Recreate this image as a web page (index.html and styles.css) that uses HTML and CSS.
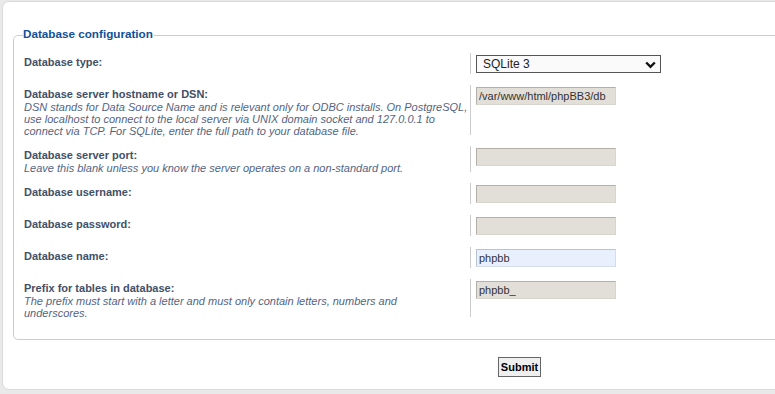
FILE: index.html
```html
<!DOCTYPE html>
<html lang="en">
<head>
<meta charset="utf-8">
<title>Database configuration</title>
<link rel="stylesheet" href="styles.css">
</head>
<body>
<div class="panel">
  <form class="form">
    <fieldset class="config">
      <legend class="legend">Database configuration</legend>

      <div class="row">
        <div class="term"><label class="label" for="dbms">Database type:</label></div>
        <div class="field">
          <div class="select-wrap">
            <select id="dbms" class="select">
              <option>SQLite 3</option>
            </select>
            <svg class="chevron" width="11" height="8" viewBox="0 0 11 8"><path d="M1.2 1.5 L5.5 5.8 L9.8 1.5" fill="none" stroke="#111" stroke-width="2.4"/></svg>
          </div>
        </div>
      </div>

      <div class="row">
        <div class="term">
          <label class="label" for="dbhost">Database server hostname or DSN:</label>
          <span class="explain">DSN stands for Data Source Name and is relevant only for ODBC installs. On PostgreSQL, use localhost to connect to the local server via UNIX domain socket and 127.0.0.1 to connect via TCP. For SQLite, enter the full path to your database file.</span>
        </div>
        <div class="field"><input id="dbhost" class="input" type="text" value="/var/www/html/phpBB3/db"></div>
      </div>

      <div class="row">
        <div class="term">
          <label class="label" for="dbport">Database server port:</label>
          <span class="explain">Leave this blank unless you know the server operates on a non-standard port.</span>
        </div>
        <div class="field"><input id="dbport" class="input" type="text" value=""></div>
      </div>

      <div class="row">
        <div class="term"><label class="label" for="dbuser">Database username:</label></div>
        <div class="field"><input id="dbuser" class="input" type="text" value=""></div>
      </div>

      <div class="row">
        <div class="term"><label class="label" for="dbpasswd">Database password:</label></div>
        <div class="field"><input id="dbpasswd" class="input" type="password" value=""></div>
      </div>

      <div class="row">
        <div class="term"><label class="label" for="dbname">Database name:</label></div>
        <div class="field"><input id="dbname" class="input input-active" type="text" value="phpbb"></div>
      </div>

      <div class="row">
        <div class="term">
          <label class="label" for="prefix">Prefix for tables in database:</label>
          <span class="explain">The prefix must start with a letter and must only contain letters, numbers and<br>underscores.</span>
        </div>
        <div class="field"><input id="prefix" class="input" type="text" value="phpbb_"></div>
      </div>
    </fieldset>

    <div class="buttons">
      <button type="button" class="submit">Submit</button>
    </div>
  </form>
</div>
</body>
</html>
```

FILE: styles.css
```css
html {
  overflow: hidden;
}

body {
  margin: 0;
  padding: 1px 0 0 2px;
  background: #e9e9e9;
  font-family: "Liberation Sans", Arial, sans-serif;
  font-size: 11px;
  color: #425067;
}

.panel {
  width: 1013px;
  padding: 0 10px 12px 10px;
  background: #ffffff;
  border: 1px solid #dadada;
  border-radius: 7px;
}

.form {
  margin: 0;
  padding-top: 25px;
}

.config {
  margin: 0;
  padding: 9px 10px 22px 10px;
  border: 1px solid #cccccc;
  border-radius: 5px;
  min-width: 0;
}

.legend {
  padding: 0 1px 3px 0;
  margin-left: -1px;
  font-size: 11.7px;
  font-weight: bold;
  line-height: 14px;
  color: #115098;
}

.row {
  display: flex;
  align-items: stretch;
  margin-bottom: 11px;
}

.row:last-child {
  margin-bottom: 0;
}

.term {
  width: 446px;
  flex: none;
  padding-top: 4px;
  box-sizing: border-box;
}

.label {
  display: block;
  font-weight: bold;
  line-height: 11px;
  color: #425067;
}

.explain {
  display: block;
  padding-top: 1px;
  margin-bottom: -2px;
  font-style: italic;
  line-height: 12px;
  color: #536482;
}

.field {
  border-left: 1px solid #cccccc;
  padding: 2px 0 1px 5px;
  flex: 1;
}

.select-wrap {
  position: relative;
  width: 185px;
  height: 18px;
}

.select {
  appearance: none;
  -webkit-appearance: none;
  display: block;
  width: 185px;
  height: 18px;
  margin: 0;
  padding: 0 0 0 6px;
  border: 1px solid #555555;
  border-radius: 0;
  background: #fafafa;
  font-family: "Liberation Sans", Arial, sans-serif;
  font-size: 12px;
  color: #222222;
}

.chevron {
  position: absolute;
  right: 5px;
  top: 6px;
  pointer-events: none;
}

.input {
  display: block;
  width: 140px;
  height: 18px;
  margin: 0;
  padding: 0 2px;
  box-sizing: border-box;
  border: 1px solid;
  border-color: #b4b0a9 #d8d5cf #d8d5cf #b4b0a9;
  background: #e2ded8;
  font-family: "Liberation Sans", Arial, sans-serif;
  font-size: 11px;
  color: #333333;
}

.input-active {
  background: #e8f0fd;
  border-color: #b9c4d2 #d6dde6 #d6dde6 #b9c4d2;
}

.buttons {
  display: flex;
  justify-content: center;
  padding-top: 17px;
}

.submit {
  margin: 0;
  padding: 1px 2px;
  height: 20px;
  border: 1px solid #666666;
  border-radius: 0;
  background: #efefef;
  font-family: "Liberation Sans", Arial, sans-serif;
  font-size: 11px;
  font-weight: bold;
  color: #000000;
}
```
